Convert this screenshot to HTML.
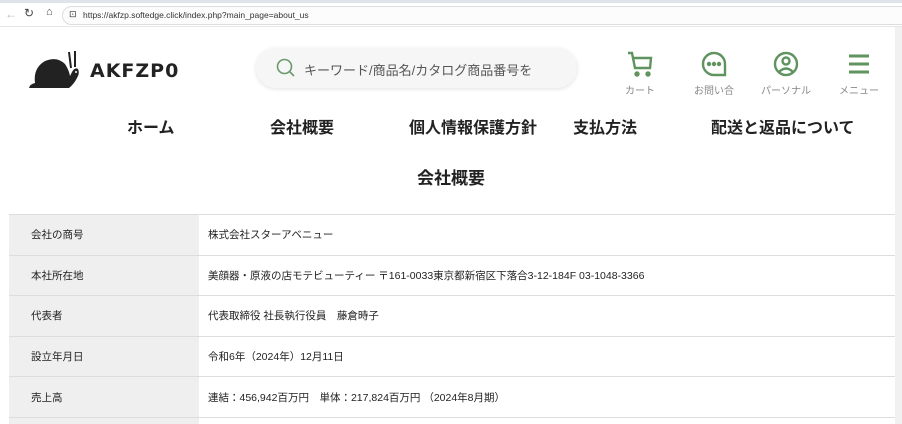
<!DOCTYPE html>
<html><head><meta charset="utf-8"><style>
*{margin:0;padding:0;box-sizing:border-box}
html,body{width:902px;height:424px;overflow:hidden}
body{background:#fff;font-family:"Liberation Sans","Noto Sans CJK JP",sans-serif;position:relative;color:#222}
.bar{position:absolute;left:0;top:0;width:902px;height:27px;background:#fff;border-top:3px solid #dfe3ea;border-bottom:1px solid #e6e6e6}
.url{position:absolute;left:62px;top:3px;width:850px;height:19px;border:1px solid #ddd;border-radius:10px;background:#fcfcfc;font-size:8.5px;color:#333;padding:3px 0 0 20px}
.sb{position:absolute;right:0;top:27px;width:7px;height:397px;background:#f1f1f1}
.abs{position:absolute}
.search{left:256px;top:48px;width:321px;height:40px;border-radius:20px;background:#f6f6f6;box-shadow:0 1px 4px rgba(0,0,0,.12)}
.search span{position:absolute;left:48px;top:12px;font-size:13px;color:#555}
.ic{position:absolute;top:50px;width:60px;text-align:center;font-size:10px;color:#888}
.ic svg{display:block;margin:0 auto 4px}
.nav{position:absolute;top:114px;font-size:16px;font-weight:bold;color:#222}
h1{position:absolute;left:0;width:902px;text-align:center;top:164px;font-size:17px;font-weight:bold}
table{position:absolute;left:9px;top:214px;width:886px;border-collapse:collapse;font-size:10.5px}
td{height:40.5px;border-top:1px solid #ddd;padding-left:22px;vertical-align:middle}
td.l{width:190px;background:#efefef}
td.r{padding-left:9px}
</style></head><body>
<div class="bar"><span class="abs" style="left:5px;top:4px;font-size:12px;color:#bbb">←</span><span class="abs" style="left:24px;top:3px;font-size:12px;color:#444">↻</span><span class="abs" style="left:46px;top:3px;font-size:11px;color:#444">⌂</span><div class="url"><span class="abs" style="left:6px;top:2px;font-size:9px">⊡</span>https://akfzp.softedge.click/index.php?main_page=about_us</div></div>
<div class="sb"></div>
<svg class="abs" style="left:27px;top:48px" width="56" height="42" viewBox="0 0 56 42"><path d="M2 40 Q3 36 8 35 Q6 20 18 13 Q30 8 38 16 Q42 22 43 28 L45 24 Q48 19 51 21 Q53 25 50 30 Q47 36 42 40 Z" fill="#222"/><path d="M44 20 L42 4 M48 19 L48 3" stroke="#222" stroke-width="2"/><circle cx="49" cy="24" r="1" fill="#fff"/></svg>
<div class="abs" style="left:90px;top:60px;font-size:19px;font-weight:900;letter-spacing:1px;color:#222;font-family:'DejaVu Sans',sans-serif">AKFZP0</div>
<div class="abs search"><svg class="abs" style="left:20px;top:10px" width="20" height="20" viewBox="0 0 20 20"><circle cx="8.5" cy="8.5" r="7" fill="none" stroke="#6a9a6a" stroke-width="1.6"/><path d="M13.5 13.5 L18 18" stroke="#6a9a6a" stroke-width="1.6"/></svg><span>キーワード/商品名/カタログ商品番号を</span></div>
<div class="ic" style="left:610px"><svg width="28" height="28" viewBox="0 0 28 28" fill="none" stroke="#5f935f" stroke-width="2.4"><path d="M2 3 H6 L9 18 H24 L25 8 H7"/><circle cx="11" cy="24" r="1.5" fill="#5f935f"/><circle cx="22" cy="24" r="1.5" fill="#5f935f"/></svg>カート</div>
<div class="ic" style="left:684px"><svg width="28" height="28" viewBox="0 0 28 28" fill="none" stroke="#5f935f" stroke-width="2.4"><path d="M14 3 A11 11 0 1 0 14 25 H25 V14 A11 11 0 0 0 14 3Z"/><circle cx="9" cy="14" r="1" fill="#5f935f"/><circle cx="14" cy="14" r="1" fill="#5f935f"/><circle cx="19" cy="14" r="1" fill="#5f935f"/></svg>お問い合</div>
<div class="ic" style="left:756px"><svg width="28" height="28" viewBox="0 0 28 28" fill="none" stroke="#5f935f" stroke-width="2.4"><circle cx="14" cy="14" r="11"/><circle cx="14" cy="11" r="3.5"/><path d="M7 22 Q14 15 21 22"/></svg>パーソナル</div>
<div class="ic" style="left:829px"><svg width="28" height="28" viewBox="0 0 28 28" stroke="#5f935f" stroke-width="3"><path d="M4 6 H24 M4 14 H24 M4 22 H24"/></svg>メニュー</div>
<div class="nav" style="left:127px">ホーム</div>
<div class="nav" style="left:270px">会社概要</div>
<div class="nav" style="left:409px">個人情報保護方針</div>
<div class="nav" style="left:573px">支払方法</div>
<div class="nav" style="left:711px">配送と返品について</div>
<h1>会社概要</h1>
<table>
<tr><td class="l">会社の商号</td><td class="r">株式会社スターアベニュー</td></tr>
<tr><td class="l">本社所在地</td><td class="r">美顔器・原液の店モテビューティー 〒161-0033東京都新宿区下落合3-12-184F 03-1048-3366</td></tr>
<tr><td class="l">代表者</td><td class="r">代表取締役 社長執行役員　藤倉時子</td></tr>
<tr><td class="l">設立年月日</td><td class="r">令和6年（2024年）12月11日</td></tr>
<tr><td class="l">売上高</td><td class="r">連結：456,942百万円　単体：217,824百万円 （2024年8月期）</td></tr>
</table>
<div class="abs" style="left:9px;top:417px;width:886px;height:7px;border-top:1px solid #ddd"><div style="width:190px;height:7px;background:#efefef"></div></div>
</body></html>
